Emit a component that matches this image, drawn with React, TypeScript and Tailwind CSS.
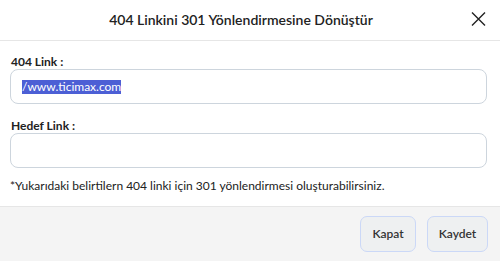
import React from "react";

export default function App() {
  return (
    <div className="w-[500px] h-[261px] bg-white flex flex-col text-[#222] font-['Lato',sans-serif] overflow-hidden">
      {/* header */}
      <div className="relative h-[41px] shrink-0 border-b border-[#e6e6e6] flex items-center justify-center">
        <h2 className="text-[14px] font-semibold leading-none -ml-[18px]">
          404 Linkini 301 Yönlendirmesine Dönüştür
        </h2>
        <button className="absolute right-[14px] top-[12px] w-[16px] h-[14px] flex items-center justify-center">
          <svg width="15" height="14" viewBox="0 0 15 14" fill="none">
            <path d="M1 0.5 L14 13.5 M14 0.5 L1 13.5" stroke="#222" strokeWidth="1.4" />
          </svg>
        </button>
      </div>

      {/* body */}
      <div className="px-[10px] pt-[14px] pb-[13px] border-b border-[#e6e6e6]">
        <label className="block text-[12px] font-bold leading-[14px] pl-[1px]">404 Link :</label>
        <div className="h-[35px] w-[477px] border border-[#cdd5dd] rounded-[8px] flex items-center px-[11px]">
          <span className="text-[12px] leading-[14px] bg-[#4c5fd5] text-white">/www.ticimax.com</span>
        </div>

        <label className="block mt-[15px] text-[12px] font-bold leading-[14px] pl-[1px]">Hedef Link :</label>
        <div className="h-[35px] w-[477px] border border-[#cdd5dd] rounded-[8px]" />

        <p className="mt-[11px] text-[12px] leading-[14px] text-[#222]">
          *Yukarıdaki belirtilern 404 linki için 301 yönlendirmesi oluşturabilirsiniz.
        </p>
      </div>

      {/* footer */}
      <div className="flex-1 bg-[#f4f4f4] flex justify-end items-start gap-[11px] pt-[9px] pr-[12px]">
        <button className="h-[36px] w-[56px] rounded-[7px] border border-[#cbd8f7] bg-[#eef0f1] text-[12px] font-semibold text-[#333]">
          Kapat
        </button>
        <button className="h-[36px] w-[61px] rounded-[7px] border border-[#cbd8f7] bg-[#eef0f1] text-[12px] font-semibold text-[#333]">
          Kaydet
        </button>
      </div>
    </div>
  );
}
